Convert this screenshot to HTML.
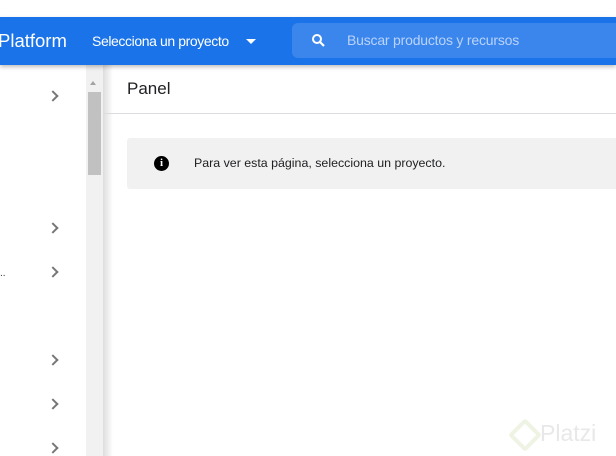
<html><head><style>
body{margin:0;width:616px;height:456px;overflow:hidden;background:#fff;font-family:"Liberation Sans",sans-serif;position:relative}
.a{position:absolute}
.chev{position:absolute;left:49px;width:6px;height:6px;border-right:2px solid #777;border-bottom:2px solid #777;transform:rotate(-45deg)}
</style></head><body>
<div class="a" style="top:17px;left:0;width:616px;height:48px;background:#1a73e8;box-shadow:0 2px 4px rgba(0,0,0,.25);z-index:2">
<div class="a" style="left:-2px;top:13px;color:#fff;font-size:18.5px">Platform</div>
<div class="a" style="left:92px;top:16px;color:#fff;font-size:14px;letter-spacing:-0.4px">Selecciona un proyecto</div>
<div class="a" style="left:246px;top:22px;width:0;height:0;border-left:5px solid transparent;border-right:5px solid transparent;border-top:5px solid #fff"></div>
<div class="a" style="left:292px;top:6px;width:330px;height:35px;background:#3b86ec;border-radius:6px">
<svg class="a" style="left:19px;top:10px" width="15" height="15" viewBox="0 0 15 15"><circle cx="6" cy="6" r="4" fill="none" stroke="#fff" stroke-width="2"/><path d="M9 9l4 4" stroke="#fff" stroke-width="2.2"/></svg>
<div class="a" style="left:55px;top:9px;color:#b9d3fa;font-size:14px;letter-spacing:-0.2px">Buscar productos y recursos</div>
</div></div>
<div class="chev" style="top:92px"></div>
<div class="chev" style="top:224px"></div>
<div class="chev" style="top:268px"></div>
<div class="chev" style="top:356px"></div>
<div class="chev" style="top:400px"></div>
<div class="chev" style="top:444px"></div>
<div class="a" style="left:0;top:268px;font-size:10px;color:#333">..</div>
<div class="a" style="left:86px;top:65px;width:17px;height:391px;background:#f1f1f1"></div>
<div class="a" style="left:88px;top:92px;width:13px;height:83px;background:#c1c1c1"></div>
<div class="a" style="left:90px;top:81px;width:0;height:0;border-left:3px solid transparent;border-right:3px solid transparent;border-bottom:4px solid #a3a3a3"></div>
<div class="a" style="left:103px;top:65px;width:10px;height:391px;background:linear-gradient(90deg,#ddd,#fff)"></div>
<div class="a" style="left:127px;top:79px;font-size:17px;color:#202124">Panel</div>
<div class="a" style="left:103px;top:113px;width:513px;height:1px;background:#dadce0"></div>
<div class="a" style="left:127px;top:138px;width:489px;height:51px;background:#f1f1f1;border-radius:3px 0 0 3px"></div>
<div class="a" style="left:154px;top:156px;width:15px;height:15px;border-radius:50%;background:#000;color:#fff;font:bold 11px 'Liberation Serif',serif;text-align:center;line-height:15px">i</div>
<div class="a" style="left:194px;top:156px;font-size:12.4px;color:#202124">Para ver esta página, selecciona un proyecto.</div>
<div class="a" style="left:540px;top:420px;font-size:23px;color:#e8e8e8">Platzi</div>
<div class="a" style="left:513px;top:423px;width:16px;height:16px;border:4px solid #eef3e4;transform:rotate(45deg);border-radius:3px"></div>
</body></html>
